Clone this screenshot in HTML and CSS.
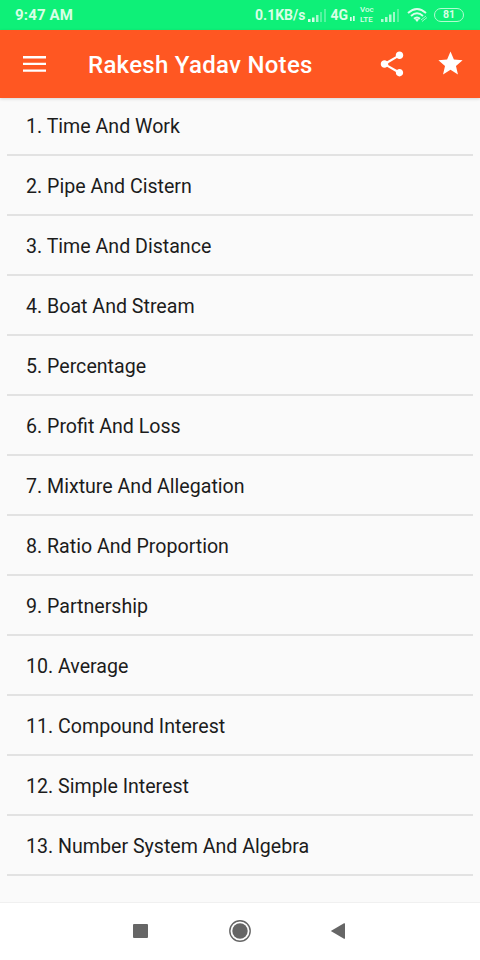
FILE: index.html
```html
<!DOCTYPE html>
<html lang="en">
<head>
    <meta charset="UTF-8">
    <meta name="viewport" content="width=device-width, initial-scale=1.0">
    <title>Rakesh Yadav Notes</title>
    <link rel="stylesheet" href="styles.css">
</head>
<body>
    <div class="screen">
        <div class="status-bar">
            <span class="time">9:47 AM</span>
            <span class="speed">0.1KB/s</span>
            <svg class="signal" width="18" height="13" viewBox="0 0 18 13" fill="#fff">
                <path d="M0 10h2.5v3H0zM4 8.5h2.5V13H4z"/>
                <path d="M8 6h2.5v7H8z" opacity=".75"/>
                <path d="M12 3h2v10h-2zM16 0h2v13h-2z" opacity=".35"/>
            </svg>
            <span class="network">4G</span>
            <svg class="data" width="5" height="6" viewBox="0 0 5 6" fill="#fff" opacity=".7">
                <path d="M0 1h1.7v4H0zM3 0h1.7v5H3z"/>
            </svg>
            <span class="volte"><span>Voc</span><span>LTE</span></span>
            <svg class="signal" width="18" height="13" viewBox="0 0 18 13" fill="#fff">
                <path d="M0 10h2.5v3H0zM4 8h2.5v5H4zM8 5.5h2.5V13H8z" opacity=".8"/>
                <path d="M12 3h2v10h-2z" opacity=".7"/>
                <path d="M16 0h2v13h-2z" opacity=".35"/>
            </svg>
            <svg class="wifi" width="21" height="15" viewBox="0 0 21 15" fill="none" stroke="#fff" stroke-width="1.9">
                <path d="M1 5Q10 -3 19 5M4 8Q10 2.5 16 8M7 10.8Q10 8 13 10.8"/>
                <path d="M8 11.5L10 14L12 11.5Q10 10 8 11.5z" fill="#fff" stroke="none"/>
                <path d="M14 12l5-4M15 13.5l5-4" stroke-width="1" opacity=".7"/>
            </svg>
            <span class="battery">81</span>
        </div>

        <header class="app-bar">
            <svg class="menu" width="24" height="18" viewBox="0 0 24 18" fill="#fff">
                <path d="M0 1h23v2.4H0zM0 7.7h23v2.4H0zM0 14.4h23v2.4H0z"/>
            </svg>
            <h1>Rakesh Yadav Notes</h1>
            <svg class="share" width="30" height="30" viewBox="0 0 24 24" fill="#fff">
                <path d="M18 16.08c-.76 0-1.44.3-1.96.77L8.91 12.7c.05-.23.09-.46.09-.7s-.04-.47-.09-.7l7.05-4.11c.54.5 1.25.81 2.04.81 1.66 0 3-1.34 3-3s-1.34-3-3-3-3 1.34-3 3c0 .24.04.47.09.7L8.04 9.81C7.5 9.31 6.79 9 6 9c-1.66 0-3 1.34-3 3s1.34 3 3 3c.79 0 1.5-.31 2.04-.81l7.12 4.16c-.05.21-.08.43-.08.65 0 1.61 1.31 2.92 2.92 2.92s2.92-1.31 2.92-2.92-1.31-2.92-2.92-2.92z"/>
            </svg>
            <svg class="star" width="29" height="29" viewBox="0 0 24 24" fill="#fff">
                <path d="M12 17.27L18.18 21l-1.64-7.03L22 9.24l-7.19-.61L12 2 9.19 8.63 2 9.24l5.46 4.73L5.82 21z"/>
            </svg>
        </header>

        <ul class="topics">
            <li>1. Time And Work</li>
            <li>2. Pipe And Cistern</li>
            <li>3. Time And Distance</li>
            <li>4. Boat And Stream</li>
            <li>5. Percentage</li>
            <li>6. Profit And Loss</li>
            <li>7. Mixture And Allegation</li>
            <li>8. Ratio And Proportion</li>
            <li>9. Partnership</li>
            <li>10. Average</li>
            <li>11. Compound Interest</li>
            <li>12. Simple Interest</li>
            <li>13. Number System And Algebra</li>
        </ul>

        <nav class="nav-bar">
            <svg width="24" height="24" viewBox="0 0 24 24" fill="#666">
                <rect x="5" y="5" width="15" height="14" rx="1"/>
            </svg>
            <svg width="24" height="24" viewBox="0 0 24 24" fill="#666">
                <circle cx="12" cy="12" r="10.2" fill="none" stroke="#666" stroke-width="1.4"/>
                <circle cx="12" cy="12" r="7.7"/>
            </svg>
            <svg width="24" height="24" viewBox="0 0 24 24" fill="#666">
                <path d="M2.8 12L16 4.3q1-.5 1 .5v14.4q0 1-1 .5z"/>
            </svg>
        </nav>
    </div>
</body>
</html>
```
FILE: styles.css
```css
* {
    box-sizing: border-box;
}

body {
    margin: 0;
    font-family: Roboto, "Liberation Sans", sans-serif;
    background-color: #fafafa;
    color: #1c1c1c;
}

.screen {
    width: 480px;
    height: 960px;
    display: flex;
    flex-direction: column;
    overflow: hidden;
}

.status-bar {
    height: 30px;
    flex: none;
    display: flex;
    align-items: center;
    padding: 0 16px 0 15px;
    background-color: #0ef078;
    color: #d8ffe6;
    font-size: 15px;
    font-weight: 700;
    white-space: nowrap;
}

.status-bar svg {
    flex: none;
    opacity: 0.85;
}

.time {
    letter-spacing: 0.15px;
}

.speed {
    margin-left: auto;
    font-size: 14px;
}

.signal {
    margin-left: 3px;
}

.network {
    margin-left: 4px;
    font-size: 14px;
}

.data {
    margin: 7px 0 0 2px;
}

.volte {
    display: flex;
    flex-direction: column;
    width: 15px;
    margin-left: 5px;
    font-size: 8px;
    font-weight: 500;
    line-height: 10px;
}

.volte + .signal {
    margin-left: 6px;
}

.wifi {
    margin-left: 8px;
}

.battery {
    width: 30px;
    height: 14px;
    margin-left: 6px;
    border: 1.5px solid #b4fbd0;
    border-radius: 7px;
    font-size: 10.5px;
    line-height: 12px;
    text-align: center;
}

.app-bar {
    position: relative;
    height: 68px;
    flex: none;
    display: flex;
    align-items: center;
    padding: 0 15px 1px 23px;
    background-color: #ff5722;
    box-shadow: 0 1px 3px rgba(0, 0, 0, 0.15);
    color: #fff;
}

.app-bar h1 {
    margin: 3px auto 0 41px;
    font-size: 24px;
    font-weight: 500;
    line-height: 30px;
    letter-spacing: 0.28px;
}

.star {
    margin-left: 29px;
}

.topics {
    flex: 1;
    margin: 0;
    padding: 0 7px;
    list-style: none;
}

.topics li {
    height: 60px;
    padding-left: 19px;
    border-bottom: 2px solid #e2e2e2;
    font-size: 19.6px;
    line-height: 62px;
}

.topics li:first-child {
    height: 58px;
    line-height: 58px;
}

.nav-bar {
    height: 58px;
    flex: none;
    display: flex;
    align-items: center;
    justify-content: center;
    gap: 76px;
    padding-bottom: 1px;
    border-top: 1px solid #f0f0f0;
    background-color: #fff;
}
```
